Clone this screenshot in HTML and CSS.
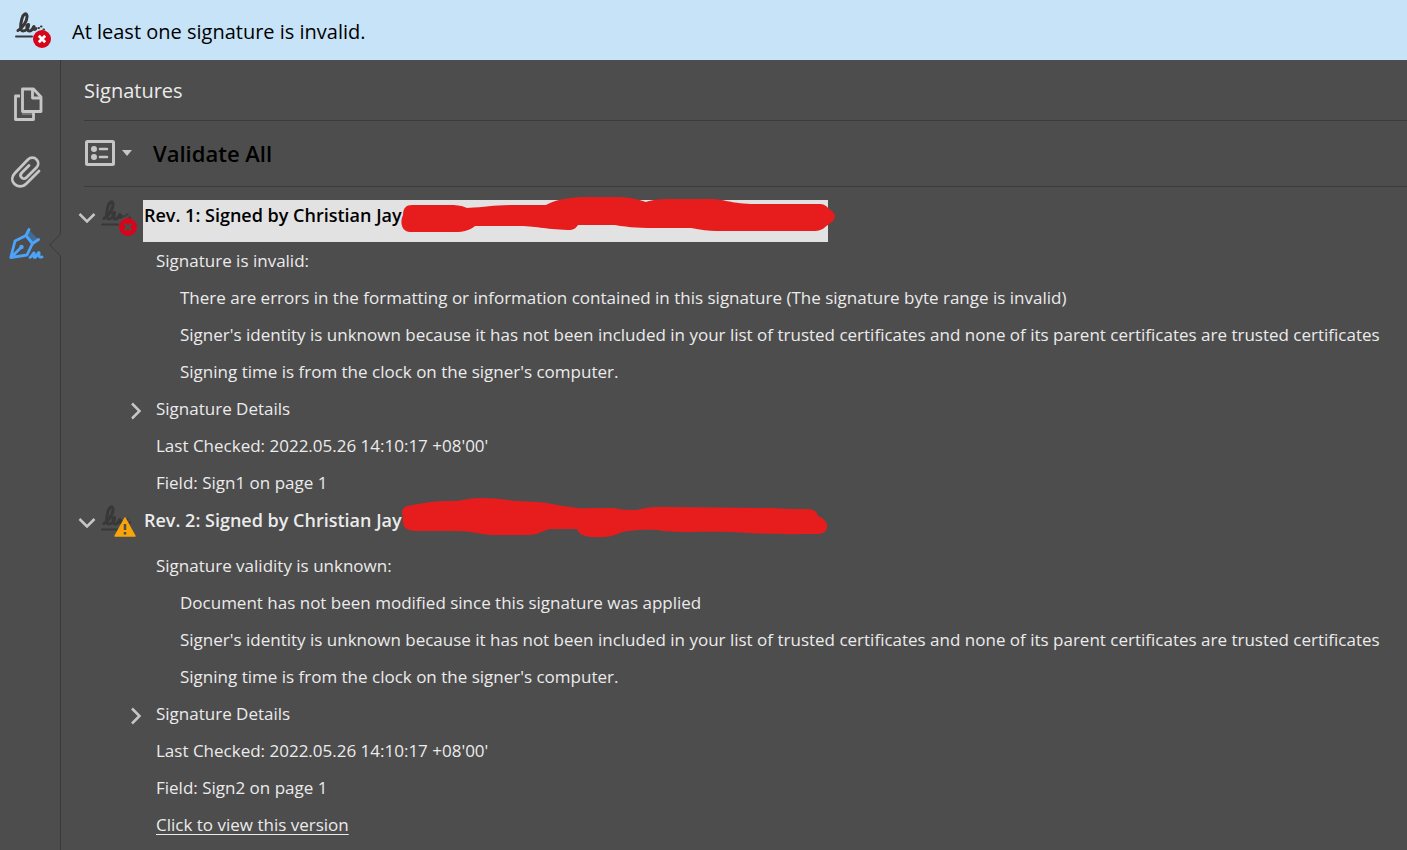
FILE: index.html
```html
<!DOCTYPE html>
<html lang="en">
<head>
<meta charset="utf-8">
<title>Signatures</title>
<meta name="viewport" content="width=device-width, initial-scale=1">
<link rel="stylesheet" href="styles.css">
</head>
<body>
<svg class="defs" aria-hidden="true">
  <symbol id="scribble" viewBox="0 0 34 32">
    <g fill="none" stroke="currentColor" stroke-linecap="round" stroke-linejoin="round">
      <path stroke-width="3" d="M3 18.500C7 16.500 12.500 9 12 4C11.500 0 8 2 7 6.500C5.500 12 4.500 19 8 19C11 19 14 15.500 13.500 12.500C11 12 11.500 19 14.500 19C16.500 19 18 16.500 19 14.500"/>
      <path stroke-width="2.800" d="M18.500 15.500c0 2.500 1.500 2.500 2.500 1"/>
      <path stroke-width="2" d="M23.500 16l.5 0M26 14.500l.5 0M28.500 17.500l.5 0"/>
      <path stroke-width="2" d="M1 24.500h16"/>
    </g>
  </symbol>
  <symbol id="chevron" viewBox="0 0 18 18">
    <path d="M1.500 5l7.500 7.500L16.500 5" fill="none" stroke="currentColor" stroke-width="2.500"/>
  </symbol>
</svg>
<header class="notice">
  <span class="status">
    <svg class="scribble" aria-hidden="true"><use href="#scribble"/></svg>
    <svg class="badge" viewBox="0 0 18 18" aria-hidden="true"><circle cx="9" cy="9" r="9" fill="#d7041a"/><path d="M5.800 5.800l6.400 6.400M12.200 5.800l-6.400 6.400" stroke="#fff" stroke-width="2.800"/></svg>
  </span>
  <p class="notice-text">At least one signature is invalid.</p>
</header>
<div class="workspace">
  <nav class="rail" aria-label="Panels">
    <button class="rail-button" type="button" aria-label="Page thumbnails">
      <svg class="rail-icon" viewBox="0 0 36 36" aria-hidden="true"><path d="M12 27h11v2H12z" fill="#767676"/><g fill="none" stroke="#c6c6c6" stroke-width="2.800" stroke-linejoin="round"><path d="M10 10H5.500v23.500h18V27"/><path d="M12.500 3h11l7.500 8V25.500H12.500z"/><path d="M22.500 3.500v8.500h8.500"/></g></svg>
    </button>
    <button class="rail-button" type="button" aria-label="Attachments">
      <svg class="rail-icon" viewBox="0 0 36 36" aria-hidden="true"><path d="M29 15L16 28C12.500 31.500 7.500 31 4.500 28C1.500 25 1.500 20.500 5 17L18 3.500C20.500 1 24.500 1 26.500 3.500C29 6 28.500 9.500 26.500 11.500L16.500 21.500C15 23 12.500 23 11.500 21.500C10 20 10.500 18 12 16.500L19 9.500" fill="none" stroke="#c6c6c6" stroke-width="2.800" stroke-linecap="round"/></svg>
    </button>
    <button class="rail-button rail-current" type="button" aria-label="Signatures" aria-pressed="true">
      <svg class="rail-icon" viewBox="0 0 36 36" aria-hidden="true"><path d="M20 5l8 8-5 3-6-8z" fill="#416b91"/><g fill="none" stroke="#4ba3fa" stroke-width="3" stroke-linecap="round" stroke-linejoin="round"><path d="M19 3.500L16 9.500L22.500 17.500L28.500 13.500"/><path d="M16 9.500L5 15L.8 31.500L17 29L22.500 17.500M1.500 31L11 21.500" stroke-width="2.800"/><path d="M20 31.500C22 30 23 27 24 27C25 27 22.500 31.500 25 31.500C27 31 27.500 26 29 26.500C30 27 27 32 32 31" stroke-width="2.800"/></g><circle cx="11.500" cy="21" r="2.200" fill="#4ba3fa"/></svg>
      <svg class="rail-pointer" viewBox="0 0 12 24" aria-hidden="true"><path d="M12 .5L.8 12L12 23.500z" fill="#4d4d4d"/><path d="M11.500 0V1L.8 12L11.500 23v1" fill="none" stroke="#393939"/></svg>
    </button>
  </nav>
  <main class="panel">
    <h1 class="panel-title">Signatures</h1>
    <div class="toolbar">
      <button class="options" type="button" aria-label="Options">
        <svg class="options-icon" viewBox="0 0 48 26" aria-hidden="true"><rect x="1.500" y="1.500" width="27" height="23" rx="1" fill="none" stroke="#c6c6c6" stroke-width="3"/><g fill="#c6c6c6"><circle cx="9" cy="9" r="3"/><circle cx="9" cy="17" r="3"/><path d="M37 10h10l-5 6z"/></g><path d="M15 9h7M15 17h7" stroke="#c6c6c6" stroke-width="2.600" stroke-linecap="round"/></svg>
      </button>
      <button class="validate" type="button">Validate All</button>
    </div>
    <section class="revision">
      <div class="revision-head">
        <button class="toggle" type="button" aria-label="Collapse revision 1" aria-expanded="true"><svg class="chevron" aria-hidden="true"><use href="#chevron"/></svg></button>
        <span class="status">
          <svg class="scribble" aria-hidden="true"><use href="#scribble"/></svg>
          <svg class="badge" viewBox="0 0 18 18" aria-hidden="true"><circle cx="9" cy="9" r="9" fill="#d7041a"/><path d="M5.800 5.800l6.400 6.400M12.200 5.800l-6.400 6.400" stroke="#4d4d4d" stroke-width="2.600"/></svg>
        </span>
        <h2 class="revision-name selected">Rev. 1: Signed by Christian Jay
          <svg class="redaction" viewBox="0 0 436 44" aria-hidden="true"><path fill="#e71d1d" d="M2 20C-2 29 2 37 9 37H54C63 37 69 35 74 31H115C136 31 142 34 167 35C173 35 175 33 177 30H214C236 34 252 33 290 33C300 35 308 36 315 36H414C421 36 424 32 428 29C436 25 436 18 428 14C425 10 422 9 418 9H350C328 8 322 4 311 4H270C256 4 251 5 245 7C234 3 224 2 213 2H180C165 3 154 5 145 10H118C92 10 88 12 66 13C60 10 54 10 48 10H11C5 10 2 13 2 20Z"/></svg>
        </h2>
      </div>
      <ul class="facts">
        <li class="fact">Signature is invalid:</li>
        <li class="fact nested">There are errors in the formatting or information contained in this signature (The signature byte range is invalid)</li>
        <li class="fact nested">Signer's identity is unknown because it has not been included in your list of trusted certificates and none of its parent certificates are trusted certificates</li>
        <li class="fact nested">Signing time is from the clock on the signer's computer.</li>
        <li class="fact"><button class="details" type="button" aria-expanded="false"><svg class="chevron closed" aria-hidden="true"><use href="#chevron"/></svg>Signature Details</button></li>
        <li class="fact">Last Checked: 2022.05.26 14:10:17 +08'00'</li>
        <li class="fact">Field: Sign1 on page 1</li>
      </ul>
    </section>
    <section class="revision">
      <div class="revision-head">
        <button class="toggle" type="button" aria-label="Collapse revision 2" aria-expanded="true"><svg class="chevron" aria-hidden="true"><use href="#chevron"/></svg></button>
        <span class="status">
          <svg class="scribble" aria-hidden="true"><use href="#scribble"/></svg>
          <svg class="badge warning" viewBox="0 0 22 20" aria-hidden="true"><path d="M11 1l10 18H1z" fill="#f7a50b" stroke="#f7a50b" stroke-width="1.500" stroke-linejoin="round"/><path d="M11 7v6M11 15v2.500" stroke="#4d4d4d" stroke-width="2.500"/></svg>
        </span>
        <h2 class="revision-name">Rev. 2: Signed by Christian Jay
          <svg class="redaction" viewBox="0 0 436 44" aria-hidden="true"><path fill="#e71d1d" d="M1 13C1 7 5 6 12 5C30 1 43 1 57 1C72-3 87-3 114 1C154 2 145 4 170 7C181 9 182 8 196 8H213C218 9 220 10 236 10C249 6 259 7 272 7L370 8C385 9 396 9 408 9C414 10 416 12 417 16C430 21 429 34 416 34C393 34 378 35 330 32C301 31 290 33 262 31C249 29 242 30 227 31C218 32 214 37 201 37C185 38 178 35 176 29H149C141 31 137 35 128 35H90C77 34 70 31 55 31H14C5 30 1 28 2 18Z"/></svg>
        </h2>
      </div>
      <ul class="facts">
        <li class="fact">Signature validity is unknown:</li>
        <li class="fact nested">Document has not been modified since this signature was applied</li>
        <li class="fact nested">Signer's identity is unknown because it has not been included in your list of trusted certificates and none of its parent certificates are trusted certificates</li>
        <li class="fact nested">Signing time is from the clock on the signer's computer.</li>
        <li class="fact"><button class="details" type="button" aria-expanded="false"><svg class="chevron closed" aria-hidden="true"><use href="#chevron"/></svg>Signature Details</button></li>
        <li class="fact">Last Checked: 2022.05.26 14:10:17 +08'00'</li>
        <li class="fact">Field: Sign2 on page 1</li>
        <li class="fact"><a class="version-link" href="#">Click to view this version</a></li>
      </ul>
    </section>
  </main>
</div>
</body>
</html>
```
FILE: styles.css
```css
* { box-sizing: border-box; }

body {
  margin: 0;
  min-height: 100vh;
  display: flex;
  flex-direction: column;
  background: #4d4d4d;
  color: #ebebeb;
  font-family: "Segoe UI", "Open Sans", "Noto Sans", sans-serif;
  font-size: 17px;
}

button {
  padding: 0;
  border: 0;
  background: none;
  color: inherit;
  font: inherit;
  text-align: left;
  cursor: pointer;
}

svg {
  display: block;
  overflow: visible;
}

.defs {
  position: absolute;
  width: 0;
  height: 0;
}

.notice {
  display: flex;
  align-items: center;
  gap: 20px;
  height: 60px;
  padding: 0 15px;
  background: #c7e3f8;
  color: #000;
}

.notice-text {
  margin: 0;
  font-size: 20px;
  line-height: 28px;
  padding-top: 3px;
}

.status {
  position: relative;
  flex: none;
  width: 37px;
  height: 36px;
  color: #383838;
}

.scribble { width: 34px; height: 32px; }

.badge {
  position: absolute;
  right: 1px;
  bottom: 0;
  width: 18px;
  height: 18px;
}

.warning {
  right: 2px;
  bottom: 4px;
  width: 22px;
  height: 20px;
}

.workspace {
  flex: 1;
  display: flex;
}

.rail {
  flex: none;
  width: 61px;
  padding-top: 26px;
  display: flex;
  flex-direction: column;
  gap: 34px;
  border-right: 1px solid #393939;
}

.rail-button {
  position: relative;
  display: block;
  height: 36px;
  padding-left: 10px;
}

.rail-icon { width: 36px; height: 36px; }

.rail-pointer {
  position: absolute;
  right: -1px;
  top: 7px;
  width: 12px;
  height: 24px;
}

.panel {
  flex: 1;
  min-width: 0;
  padding-left: 14px;
}

.panel-title {
  margin: 0 0 0 9px;
  height: 61px;
  font-size: 20px;
  font-weight: 400;
  line-height: 61px;
  border-bottom: 1px solid #3b3b3b;
}

.toolbar {
  display: flex;
  align-items: center;
  gap: 20px;
  height: 66px;
  margin-left: 9px;
  padding: 0 0 2px 1px;
  border-bottom: 1px solid #3b3b3b;
}

.options-icon { width: 48px; height: 26px; }

.validate {
  color: #000;
  font-size: 22px;
  line-height: 26px;
  font-weight: 600;
}

.revision { padding-top: 4px; }

.toolbar + .revision { padding-top: 13px; }

.revision-head {
  display: flex;
  align-items: flex-start;
  height: 42px;
}

.toggle {
  flex: none;
  width: 26px;
  padding: 9px 0 0 3px;
}

.chevron {
  width: 18px;
  height: 18px;
  color: #c6c6c6;
}

.revision-name {
  position: relative;
  width: 685px;
  height: 42px;
  margin: 0 0 0 5px;
  padding-left: 1px;
  font-size: 18px;
  font-weight: 600;
  line-height: 30px;
  white-space: nowrap;
}

.selected {
  background: #e2e2e2;
  color: #000;
}

.redaction {
  position: absolute;
  left: 258px;
  top: -5px;
  width: 436px;
  height: 44px;
}

.facts {
  margin: 0;
  padding: 0 0 0 81px;
  list-style: none;
}

.fact {
  min-height: 37px;
  line-height: 37px;
}

.nested { padding-left: 24px; }

.details {
  display: flex;
  align-items: center;
  gap: 11px;
  margin-left: -29px;
}

.closed {
  margin-top: 5px;
  transform: rotate(-90deg);
}

.version-link {
  color: inherit;
  text-underline-offset: 3px;
}
```
